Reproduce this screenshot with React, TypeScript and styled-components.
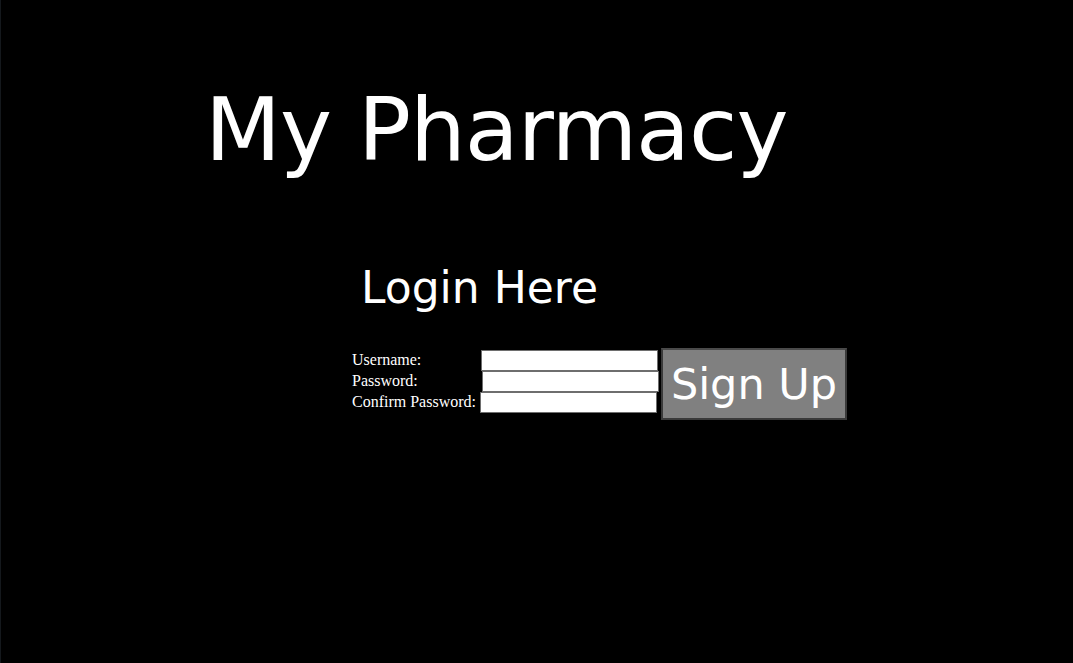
import React from "react";
import styled, { createGlobalStyle } from "styled-components";

const Global = createGlobalStyle`
  html, body { margin: 0; padding: 0; background: #000; }
  body { min-height: 663px; font-family: "Liberation Serif", serif; }
`;

const Page = styled.main`
  min-height: 663px;
  background: #000;
  display: flex;
  flex-direction: column;
  border-left: 1px solid #14181c;
`;

const Title = styled.h1`
  margin: 70px 0 0 204px;
  font-family: "Comic Sans MS", "DejaVu Sans", sans-serif;
  font-weight: normal;
  font-size: 88px;
  line-height: 120px;
  color: #fff;
  letter-spacing: -1px;
`;

const Subtitle = styled.h2`
  margin: 68px 0 0 360px;
  font-family: "Comic Sans MS", "DejaVu Sans", sans-serif;
  font-weight: normal;
  font-size: 44px;
  line-height: 60px;
  color: #fff;
`;

const FormRow = styled.form`
  margin: 30px 0 0 351px;
  display: flex;
  align-items: flex-start;
  gap: 4px;
`;

const Fields = styled.div`
  display: grid;
  grid-template-columns: 128px 177px;
  grid-auto-rows: 21px;
  margin-top: 2px;
`;

const Label = styled.label`
  color: #fff;
  font-family: "Liberation Serif", serif;
  font-size: 16px;
  line-height: 20px;
  white-space: nowrap;
`;

const Input = styled.input<{ $shift?: number }>`
  box-sizing: border-box;
  width: 177px;
  height: 21px;
  margin: 0 0 0 ${(p) => p.$shift ?? 0}px;
  padding: 0 2px;
  background: #fff;
  border: 1px solid #6e6e6e;
  outline: none;
`;

const Button = styled.button`
  box-sizing: border-box;
  width: 186px;
  height: 72px;
  background: #808080;
  border: 2px solid #3a3a3a;
  border-top-color: #4a4a4a;
  color: #fff;
  font-family: "Comic Sans MS", "DejaVu Sans", sans-serif;
  font-size: 43px;
  padding: 0;
  cursor: pointer;
`;

export default function App() {
  return (
    <>
      <Global />
      <Page>
        <Title>My Pharmacy</Title>
        <Subtitle>Login Here</Subtitle>
        <FormRow onSubmit={(e) => e.preventDefault()}>
          <Fields>
            <Label htmlFor="u">Username:</Label>
            <Input id="u" type="text" $shift={1} />
            <Label htmlFor="p">Password:</Label>
            <Input id="p" type="password" $shift={2} />
            <Label htmlFor="c">Confirm Password:</Label>
            <Input id="c" type="password" $shift={0} />
          </Fields>
          <Button type="submit">Sign Up</Button>
        </FormRow>
      </Page>
    </>
  );
}
